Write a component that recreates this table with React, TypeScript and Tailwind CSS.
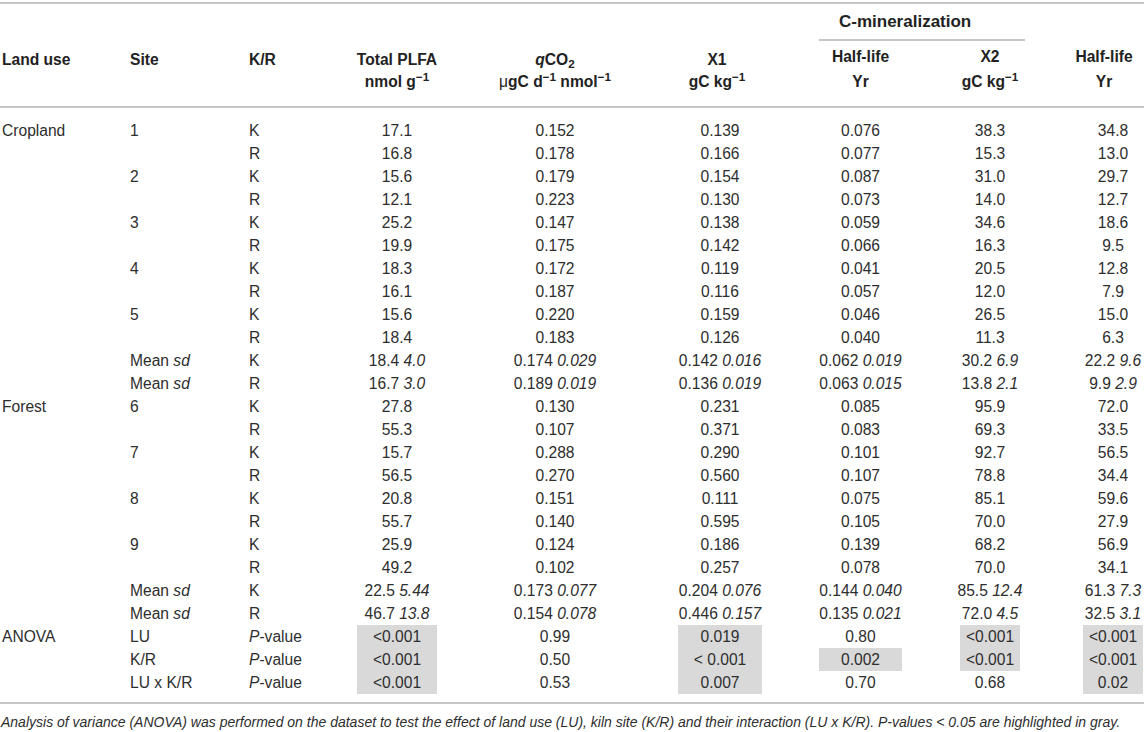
import type { ReactNode } from 'react';

// column widths for the six numeric columns (margin = gap before the column)
const NUM_COLS = [
  'w-[80px]',
  'ml-[58px] w-[120px]',
  'ml-[63px] w-[84px]',
  'ml-[57px] w-[83px]',
  'ml-[58px] w-[60px]',
  'ml-[63px] w-[60px]',
];

interface RowData {
  landUse?: string;
  site?: ReactNode;
  kr: ReactNode;
  values: string[];
  mean?: boolean;
  shaded?: boolean[];
}

const meanSd = <>Mean <i>sd</i></>;
const pValue = <><i>P</i>-value</>;

const rows: RowData[] = [
  { landUse: 'Cropland', site: '1', kr: 'K', values: ['17.1', '0.152', '0.139', '0.076', '38.3', '34.8'] },
  { kr: 'R', values: ['16.8', '0.178', '0.166', '0.077', '15.3', '13.0'] },
  { site: '2', kr: 'K', values: ['15.6', '0.179', '0.154', '0.087', '31.0', '29.7'] },
  { kr: 'R', values: ['12.1', '0.223', '0.130', '0.073', '14.0', '12.7'] },
  { site: '3', kr: 'K', values: ['25.2', '0.147', '0.138', '0.059', '34.6', '18.6'] },
  { kr: 'R', values: ['19.9', '0.175', '0.142', '0.066', '16.3', '9.5'] },
  { site: '4', kr: 'K', values: ['18.3', '0.172', '0.119', '0.041', '20.5', '12.8'] },
  { kr: 'R', values: ['16.1', '0.187', '0.116', '0.057', '12.0', '7.9'] },
  { site: '5', kr: 'K', values: ['15.6', '0.220', '0.159', '0.046', '26.5', '15.0'] },
  { kr: 'R', values: ['18.4', '0.183', '0.126', '0.040', '11.3', '6.3'] },
  { site: meanSd, kr: 'K', mean: true, values: ['18.4 4.0', '0.174 0.029', '0.142 0.016', '0.062 0.019', '30.2 6.9', '22.2 9.6'] },
  { site: meanSd, kr: 'R', mean: true, values: ['16.7 3.0', '0.189 0.019', '0.136 0.019', '0.063 0.015', '13.8 2.1', '9.9 2.9'] },
  { landUse: 'Forest', site: '6', kr: 'K', values: ['27.8', '0.130', '0.231', '0.085', '95.9', '72.0'] },
  { kr: 'R', values: ['55.3', '0.107', '0.371', '0.083', '69.3', '33.5'] },
  { site: '7', kr: 'K', values: ['15.7', '0.288', '0.290', '0.101', '92.7', '56.5'] },
  { kr: 'R', values: ['56.5', '0.270', '0.560', '0.107', '78.8', '34.4'] },
  { site: '8', kr: 'K', values: ['20.8', '0.151', '0.111', '0.075', '85.1', '59.6'] },
  { kr: 'R', values: ['55.7', '0.140', '0.595', '0.105', '70.0', '27.9'] },
  { site: '9', kr: 'K', values: ['25.9', '0.124', '0.186', '0.139', '68.2', '56.9'] },
  { kr: 'R', values: ['49.2', '0.102', '0.257', '0.078', '70.0', '34.1'] },
  { site: meanSd, kr: 'K', mean: true, values: ['22.5 5.44', '0.173 0.077', '0.204 0.076', '0.144 0.040', '85.5 12.4', '61.3 7.3'] },
  { site: meanSd, kr: 'R', mean: true, values: ['46.7 13.8', '0.154 0.078', '0.446 0.157', '0.135 0.021', '72.0 4.5', '32.5 3.1'] },
  {
    landUse: 'ANOVA', site: 'LU', kr: pValue,
    values: ['<0.001', '0.99', '0.019', '0.80', '<0.001', '<0.001'],
    shaded: [true, false, true, false, true, true],
  },
  {
    site: 'K/R', kr: pValue,
    values: ['<0.001', '0.50', '< 0.001', '0.002', '<0.001', '<0.001'],
    shaded: [true, false, true, true, true, true],
  },
  {
    site: 'LU x K/R', kr: pValue,
    values: ['<0.001', '0.53', '0.007', '0.70', '0.68', '0.02'],
    shaded: [true, false, true, false, false, true],
  },
];

function Value({ text, mean }: { text: string; mean?: boolean }) {
  if (!mean) return <>{text}</>;
  const [m, sd] = text.split(' ');
  return <>{m} <i>{sd}</i></>;
}

function DataRow({ row }: { row: RowData }) {
  return (
    <div className="flex h-[23px] leading-[23px] pl-[2px] whitespace-nowrap">
      <div className="w-[128px]">{row.landUse}</div>
      <div className="w-[119px]">{row.site}</div>
      <div className="w-[108px]">{row.kr}</div>
      {row.values.map((v, i) => (
        <div
          key={i}
          className={`${NUM_COLS[i]} flex justify-center ${row.shaded?.[i] ? 'bg-[#d9d9d9]' : ''}`}
        >
          <span>
            <Value text={v} mean={row.mean} />
          </span>
        </div>
      ))}
    </div>
  );
}

function HeadCell({ className, children }: { className: string; children: ReactNode }) {
  return <div className={`flex flex-col items-center ${className}`}>{children}</div>;
}

export default function App() {
  return (
    <div className="w-[1144px] h-[732px] bg-white text-[15.6px] text-[#2e2e2e] font-['Liberation_Sans',Arial,sans-serif] overflow-hidden">
      {/* header */}
      <div className="mt-[2px] border-t-2 border-[#c6c6c6]">
        <div className="flex h-[37px]">
          <div className="ml-[819px] w-[206px] h-[37px] border-b-2 border-[#c6c6c6] pl-[20px] pt-[7px] leading-[22px] text-[17px] font-bold text-[#222] whitespace-nowrap">
            C-mineralization
          </div>
        </div>
        <div className="flex h-[67px] pl-[2px] border-b-2 border-[#c6c6c6] font-bold text-[#222] whitespace-nowrap leading-[22px]">
          <div className="w-[128px] pt-[8px]">Land use</div>
          <div className="w-[119px] pt-[8px]">Site</div>
          <div className="w-[108px] pt-[8px]">K/R</div>
          <HeadCell className="w-[80px] pt-[8px]">
            <span>Total PLFA</span>
            <span>nmol g<sup>−1</sup></span>
          </HeadCell>
          <HeadCell className="ml-[58px] w-[120px] pt-[8px]">
            <span><i>q</i>CO<sub>2</sub></span>
            <span><span className="font-normal">μ</span>gC d<sup>−1</sup> nmol<sup>−1</sup></span>
          </HeadCell>
          <HeadCell className="ml-[63px] w-[84px] pt-[8px] pr-[6px]">
            <span>X1</span>
            <span>gC kg<sup>−1</sup></span>
          </HeadCell>
          <HeadCell className="ml-[57px] w-[83px] pt-[3px] leading-[25px]">
            <span>Half-life</span>
            <span>Yr</span>
          </HeadCell>
          <HeadCell className="ml-[58px] w-[60px] pt-[3px] leading-[25px]">
            <span>X2</span>
            <span>gC kg<sup>−1</sup></span>
          </HeadCell>
          <HeadCell className="ml-[63px] w-[60px] pt-[3px] leading-[25px] pr-[18px]">
            <span>Half-life</span>
            <span>Yr</span>
          </HeadCell>
        </div>
      </div>

      {/* body */}
      <div className="mt-[11px]">
        {rows.map((r, i) => (
          <DataRow key={i} row={r} />
        ))}
      </div>

      {/* footnote */}
      <div className="mt-[8px] border-t-2 border-[#c6c6c6] pt-[10px] pl-[1px] text-[14px] leading-[17px] italic whitespace-nowrap">
        Analysis of variance (ANOVA) was performed on the dataset to test the effect of land use (LU), kiln site (K/R) and their interaction (LU x K/R). P-values &lt; 0.05 are highlighted in gray.
      </div>
    </div>
  );
}
